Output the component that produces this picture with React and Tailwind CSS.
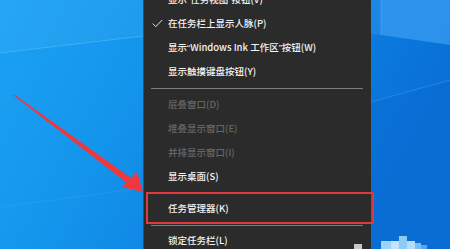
import React from "react";

const font = { fontFamily: '"Noto Sans CJK SC", "Noto Sans", sans-serif' };

function Q({ children }) {
  return <span className="font-['Liberation_Sans',sans-serif]">{children}</span>;
}

function Row({ children, disabled, check }) {
  return (
    <div className="relative flex h-6 items-center pl-[25px]">
      {check && (
        <svg className="absolute left-[9px] top-[7px]" width="11" height="9" viewBox="0 0 11 9">
          <path d="M0.8 4.6 L3.8 7.6 L10.2 1" fill="none" stroke="#e8e8e8" strokeWidth="1" />
        </svg>
      )}
      <span className={disabled ? "text-[#666666]" : "text-[#f4f4f4]"}>{children}</span>
    </div>
  );
}

function Sep({ h }) {
  return (
    <div className={`flex items-center px-2 ${h}`}>
      <div className="h-px w-full bg-[#7c7c7c]" />
    </div>
  );
}

export default function App() {
  return (
    <div className="relative h-[249px] w-[450px] overflow-hidden bg-[#1597ec]" style={font}>
      <svg className="absolute inset-0" width="450" height="249" viewBox="0 0 450 249">
        <defs>
          <linearGradient id="bg" x1="0" y1="0" x2="1" y2="0.3">
            <stop offset="0" stopColor="#1ba2f4" />
            <stop offset="0.35" stopColor="#1495ec" />
            <stop offset="0.85" stopColor="#0a78dd" />
            <stop offset="1" stopColor="#0a6fd6" />
          </linearGradient>
        </defs>
        <rect width="450" height="249" fill="url(#bg)" />
        <polygon points="0,0 143,0 143,36 0,53" fill="#ffffff" opacity="0.05" />
        <line x1="0" y1="53" x2="143" y2="36" stroke="#7fd0ff" strokeWidth="1" opacity="0.35" />
        <line x1="0" y1="207" x2="143" y2="188" stroke="#7fd0ff" strokeWidth="1" opacity="0.12" />
        <polygon points="381,0 450,0 450,45 381,35" fill="#3a9cf0" opacity="0.75" />
        <line x1="381" y1="0" x2="381" y2="35" stroke="#5fb4f5" strokeWidth="1" opacity="0.6" />
        <polygon points="371,0 381,0 381,35 371,34" fill="#2f8fea" opacity="0.5" />
        <line x1="371" y1="102" x2="450" y2="80" stroke="#4aa8f2" strokeWidth="1" opacity="0.5" />
        <polygon points="371,102 450,80 450,249 371,249" fill="#0868d0" opacity="0.25" />
        <rect x="381" y="241" width="10" height="8" fill="#9fd2f7" />
        <rect x="391" y="241" width="8" height="8" fill="#c3e3fb" />
        <rect x="399" y="236" width="8" height="13" fill="#8ecaf5" />
        <rect x="407" y="241" width="8" height="8" fill="#b5dcf9" />
        <rect x="415" y="243" width="6" height="6" fill="#7dbcf0" />
        <rect x="421" y="245" width="6" height="4" fill="#5aa6ec" />
        <polygon points="13,95 15,95 131,178 127,183" fill="#f0383c" />
        <polygon points="143,192 122,187 137,172" fill="#f0383c" />
      </svg>

      <div className="absolute left-[143px] top-[-12px] w-[228px] bg-[#2b2b2b] text-[9.5px] font-medium leading-none">
        <div className="pointer-events-none absolute inset-y-0 left-0 w-px bg-[#4a4a4a]" />
        <Row>显示<Q>“</Q>任务视图<Q>”</Q>按钮(V)</Row>
        <Row check>在任务栏上显示人脉(P)</Row>
        <Row>显示<Q>“</Q>Windows Ink 工作区<Q>”</Q>按钮(W)</Row>
        <Row>显示触摸键盘按钮(Y)</Row>
        <Sep h="h-[9px]" />
        <Row disabled>层叠窗口(D)</Row>
        <Row disabled>堆叠显示窗口(E)</Row>
        <Row disabled>并排显示窗口(I)</Row>
        <Row>显示桌面(S)</Row>
        <Sep h="h-2" />
        <Row>任务管理器(K)</Row>
        <Sep h="h-2" />
        <div className="relative">
          <Row>锁定任务栏(L)</Row>
          <div className="absolute right-[9px] top-[15px] h-[9px] w-[8px] bg-[#c8c8c8]" />
        </div>
      </div>

      <div className="absolute left-[146px] top-[192px] h-[32px] w-[228px] border-2 border-[#e0393e]" />
    </div>
  );
}
